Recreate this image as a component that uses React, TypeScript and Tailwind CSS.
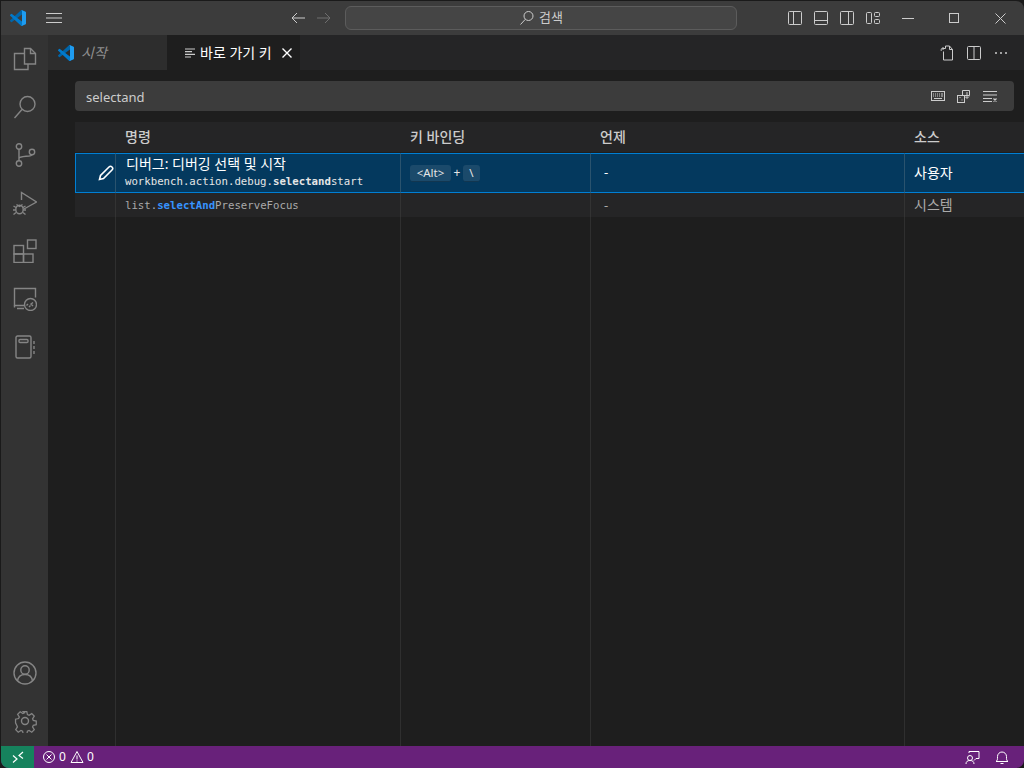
const sansFont = "font-['Noto_Sans','Noto_Sans_CJK_KR',sans-serif]"

function VsLogo() {
    return (
        <svg viewBox="0 0 100 100" className="w-4 h-4 shrink-0">
            <path fill="#0065A9" d="M96.5 10.8 75.9.9a6.2 6.2 0 0 0-7.1 1.2L1.3 63.6a4.2 4.2 0 0 0 0 6.2l5.5 5a4.2 4.2 0 0 0 5.3.2L93.4 13.6c2.7-2 6.6-.1 6.6 3.3v-.2a6.2 6.2 0 0 0-3.5-5.9z" />
            <path fill="#007ACC" d="M96.5 89.2 75.9 99.1a6.2 6.2 0 0 1-7.1-1.2L1.3 36.4a4.2 4.2 0 0 1 0-6.2l5.5-5a4.2 4.2 0 0 1 5.3-.2L93.4 86.4c2.7 2 6.6.1 6.6-3.3v.2a6.2 6.2 0 0 1-3.5 5.9z" />
            <path fill="#1F9CF0" d="M75.9 99.1a6.2 6.2 0 0 1-7.1-1.2c2.3 2.3 6.2.7 6.2-2.6V4.7c0-3.3-3.9-4.9-6.2-2.6A6.2 6.2 0 0 1 75.9.9l20.6 9.9a6.2 6.2 0 0 1 3.5 5.6v67.2a6.2 6.2 0 0 1-3.5 5.6z" />
        </svg>
    )
}

type IconProps = { size?: number; color?: string; children: React.ReactNode }

function Icon({ size = 16, color = "#cccccc", children }: IconProps) {
    return (
        <svg width={size} height={size} viewBox="0 0 16 16" fill="none" stroke={color} strokeWidth={1} className="shrink-0">
            {children}
        </svg>
    )
}

function TitleBar() {
    return (
        <div className="flex items-center h-[34px] bg-[#3c3c3c] shrink-0 rounded-tr-lg">
            <div className="w-[9px]" />
            <VsLogo />
            <div className="ml-5">
                <Icon>
                    <path d="M0 3.500h16M0 8h16M0 12.500h16" />
                </Icon>
            </div>
            <div className="ml-[228px]">
                <Icon size={16}>
                    <path d="M15 8H2M7 3 2 8l5 5" />
                </Icon>
            </div>
            <div className="ml-[10px]">
                <Icon size={16} color="#6e6e6e">
                    <path d="M1 8h13M9 3l5 5-5 5" />
                </Icon>
            </div>
            <div className="ml-[13px] w-[392px] h-6 rounded-md bg-[#454545] border border-[#5c5c5c] flex items-center justify-center gap-[4px] text-[13px] text-[#cccccc]">
                <Icon size={16}>
                    <circle cx="9.500" cy="6" r="4.500" />
                    <path d="M6.300 9.300 1.500 14.500" />
                </Icon>
                <span>검색</span>
            </div>
            <div className="ml-[50px] flex gap-[10px]">
                <Icon>
                    <rect x="1.500" y="1.500" width="13" height="13" rx="1" />
                    <path d="M6.500 1.500v13" />
                </Icon>
                <Icon>
                    <rect x="1.500" y="1.500" width="13" height="13" rx="1" />
                    <path d="M1.500 10.500h13" />
                </Icon>
                <Icon>
                    <rect x="1.500" y="1.500" width="13" height="13" rx="1" />
                    <path d="M9.500 1.500v13" />
                </Icon>
                <Icon>
                    <rect x="1.500" y="2.500" width="5" height="11" rx="1" />
                    <rect x="9.500" y="2.500" width="5" height="4" rx="1" />
                    <rect x="9.500" y="9.500" width="5" height="4" rx="1" />
                </Icon>
            </div>
            <div className="ml-[21px] w-3 h-px bg-[#cccccc]" />
            <div className="ml-[35px] w-[10px] h-[10px] border border-[#cccccc]" />
            <div className="ml-[36px]">
                <svg width="11" height="11" viewBox="0 0 11 11" stroke="#cccccc" fill="none">
                    <path d="M.5.5l10 10M10.500.5l-10 10" />
                </svg>
            </div>
        </div>
    )
}

function ActivityItem({ children }: { children: React.ReactNode }) {
    return (
        <div className="h-12 flex items-center justify-center">
            <svg width="24" height="24" viewBox="0 0 24 24" fill="none" stroke="#858585" strokeWidth={1.4}>
                {children}
            </svg>
        </div>
    )
}

function ActivityBar() {
    return (
        <div className="w-[47px] bg-[#333333] flex flex-col justify-between shrink-0">
            <div className="flex flex-col">
                <ActivityItem>
                    <path d="M11.500 1.500h6l5 5v10.500h-11z" />
                    <path d="M17.500 1.500v5h5" />
                    <path d="M11.500 6.500H1.500v16h13.500V17" />
                </ActivityItem>
                <ActivityItem>
                    <circle cx="14.500" cy="9" r="7.500" />
                    <path d="M9 14.500 1.500 23" />
                </ActivityItem>
                <ActivityItem>
                    <circle cx="6" cy="3.500" r="2.700" />
                    <circle cx="6" cy="20.500" r="2.700" />
                    <circle cx="19" cy="9" r="2.700" />
                    <path d="M6 6.200v11.600M6 15.500c0-3 13-1.500 13-3.800" />
                </ActivityItem>
                <ActivityItem>
                    <path d="M8.500 9V1.500L23.500 11 11 18" />
                    <ellipse cx="6.500" cy="18.500" rx="3.700" ry="4.300" />
                    <path d="M3.500 13.500 6.500 15.500 9.500 13.500M.5 15l2.500 1.500M12.500 15 10 16.500M0 19h2.800M13 19h-2.800M.5 23.500 3 21.500M12.500 23.500 10 21.500" />
                </ActivityItem>
                <ActivityItem>
                    <rect x="1" y="6.500" width="9.500" height="8.500" />
                    <rect x="1" y="15" width="9.500" height="8.500" />
                    <rect x="10.500" y="15" width="9.500" height="8.500" />
                    <rect x="14.500" y="1" width="8.500" height="8.500" />
                </ActivityItem>
                <ActivityItem>
                    <path d="M11 18.500H1.500V1.500h21v9" />
                    <path d="M1.500 18.500v2M4 21.500h7" />
                    <circle cx="17.500" cy="17.500" r="6" />
                    <path d="M15 17l-1.500 1.500M20 15.500l-2 1.500 2 2M16 20l1.500-1.500" />
                </ActivityItem>
                <ActivityItem>
                    <rect x="3" y="1" width="15" height="22" rx="1.500" />
                    <rect x="6" y="4.500" width="9" height="3" rx="1" />
                    <path d="M21 6v3M21 11v3M21 16v3" />
                </ActivityItem>
            </div>
            <div className="flex flex-col mb-[1px]">
                <ActivityItem>
                    <circle cx="12" cy="12" r="11" />
                    <circle cx="12" cy="9" r="4.200" />
                    <path d="M4.500 20c.5-4 3.500-6.500 7.500-6.500s7 2.500 7.500 6.500" />
                </ActivityItem>
                <ActivityItem>
                    <circle cx="12" cy="12" r="3.500" />
                    <path d="M10 1.500h4l.7 3.400 1.800.8 3-1.900 2.800 2.800-1.900 3 .8 1.800 3.300.7v4l-3.300.7-.8 1.800 1.900 3-2.800 2.800-3-1.900-1.800.8-.7 3.300h-4l-.7-3.300-1.800-.8-3 1.900-2.800-2.800 1.900-3-.8-1.800L1.500 14v-4l3.400-.7.8-1.800-1.900-3 2.800-2.800 3 1.900 1.800-.8z" transform="translate(1.200 1.200) scale(0.9)" />
                </ActivityItem>
            </div>
        </div>
    )
}

function TabBar() {
    return (
        <div className="flex h-[35px] bg-[#252526] shrink-0">
            <div className="w-[119px] bg-[#2d2d2d] flex items-center pl-[10px] gap-[7px]">
                <VsLogo />
                <span className="text-[14px] italic text-[#8f8f8f]">시작</span>
            </div>
            <div className="w-[133px] bg-[#1e1e1e] flex items-center pl-[18px] text-[14px] text-white">
                <svg width="10" height="10" viewBox="0 0 10 10" className="shrink-0">
                    <path d="M0 1h10M0 3.700h7M0 6.300h10M0 9h6" stroke="#cccccc" strokeWidth={1.200} />
                </svg>
                <span className="ml-[5px] whitespace-nowrap">바로 가기 키</span>
                <svg width="10" height="10" viewBox="0 0 10 10" stroke="#ffffff" strokeWidth={1.400} className="ml-[10px] shrink-0">
                    <path d="M.5.5l9 9M9.500.5l-9 9" />
                </svg>
            </div>
            <div className="flex-1 flex items-center justify-end gap-[11px] pr-[15px]">
                <Icon>
                    <path d="M4.500 6.500v8.500h9V4.500l-3-3.500H6.500v2.500M10.500 1v3.500h3" />
                    <path d="M6.500 3.500H3.500a1.500 1.500 0 0 0-1 2.500M4.500 2l-1.500 1.500L4.500 5" />
                </Icon>
                <Icon>
                    <rect x="1.500" y="1.500" width="13" height="13" rx="1" />
                    <path d="M8 1.500v13" />
                </Icon>
                <Icon>
                    <circle cx="3" cy="8" r="1" fill="#cccccc" stroke="none" />
                    <circle cx="8" cy="8" r="1" fill="#cccccc" stroke="none" />
                    <circle cx="13" cy="8" r="1" fill="#cccccc" stroke="none" />
                </Icon>
            </div>
        </div>
    )
}

function SearchBox() {
    return (
        <div className="h-[30px] mr-[10px] bg-[#3c3c3c] rounded-sm flex items-center pl-[11px] pr-[16px] text-[13px] text-[#cccccc]">
            <span className="flex-1 pt-[3px]">selectand</span>
            <div className="flex gap-[10px]">
                <Icon>
                    <rect x="1.500" y="3.500" width="13" height="9" />
                    <path d="M3 6h1M5 6h1M7 6h1M9 6h1M11 6h2M3 8h1M5 8h1M7 8h1M9 8h1M11 8h2M4 10.500h8" />
                </Icon>
                <Icon>
                    <rect x="1.500" y="7.500" width="7" height="7" />
                    <path d="M6.500 7.500v-5h7v5h-5" />
                    <path d="M11 4v6M9 8.500l2 2 2-2M3.500 9.500h1M5.500 12h1" />
                </Icon>
                <Icon>
                    <path d="M1 3.500h14M1 7h14M1 10.500h9M1 13.500h9" />
                    <path d="M11.500 10.500l3 3M14.500 10.500l-3 3" strokeWidth={1.300} />
                </Icon>
            </div>
        </div>
    )
}

const monoClass = "font-['DejaVu_Sans_Mono',monospace] text-[10.7px]"

type ColumnProps = {
    width: string
    title?: string
    selected?: React.ReactNode
    row?: React.ReactNode
}

function Column({ width, title, selected, row }: ColumnProps) {
    return (
        <div className={`${width} flex flex-col`}>
            <div className="h-[30px] mb-px pb-[2px] bg-[#252526] flex items-center pl-[9px] text-[14px] font-medium text-[#cccccc]">{title}</div>
            <div className="h-10 bg-[#04395e] border-y border-[#007fd4] border-r border-r-[#2a536e] flex items-center pl-[9px] text-white text-[14px]">{selected}</div>
            <div className="h-6 pt-px bg-[#252526] border-r border-[#333333] flex items-center pl-[9px] text-[#aaaaaa] text-[14px]">{row}</div>
            <div className="flex-1 border-r border-[#2f2f2f]" />
        </div>
    )
}

function KeyTable() {
    return (
        <div className="flex flex-1 mt-[11px]">
            <div className="w-[41px] flex flex-col">
                <div className="h-[30px] mb-px bg-[#252526]" />
                <div className="h-10 bg-[#04395e] border border-[#007fd4] border-r-[#2a536e] flex items-center justify-end">
                    <svg width="16" height="16" viewBox="0 0 16 16" fill="none" stroke="#ffffff" strokeWidth={1.600} className="mr-px">
                        <path d="M1.500 14.500l1-4L11 2c1-1 2-1 3 0s1 2 0 3l-8.500 8.500z" />
                    </svg>
                </div>
                <div className="h-6 bg-[#252526] border-r border-[#333333]" />
                <div className="flex-1 border-r border-[#2f2f2f]" />
            </div>
            <Column
                width="w-[285px]"
                title="명령"
                selected={
                    <div className="flex flex-col">
                        <span className="leading-[19px] pl-px">디버그: 디버깅 선택 및 시작</span>
                        <span className={`${monoClass} leading-[18px] pb-px text-[#e6e6e6]`}>
                            workbench.action.debug.<span className="font-bold">selectand</span>start
                        </span>
                    </div>
                }
                row={
                    <span className={`${monoClass} pt-[1px]`}>
                        list.<span className="text-[#3794ff] font-bold">selectAnd</span>PreserveFocus
                    </span>
                }
            />
            <Column
                width="w-[190px]"
                title="키 바인딩"
                selected={
                    <div className="flex items-center text-[11.5px] text-[#e6e6e6]">
                        <span className="h-[17px] w-[41px] flex items-center justify-center rounded-[3px] bg-[#1b4a6b] border-b border-[#123650]">{"<Alt>"}</span>
                        <span className="w-3 text-center text-xs">+</span>
                        <span className="h-[17px] w-[17px] flex items-center justify-center rounded-[3px] bg-[#1b4a6b] border-b border-[#123650]">\</span>
                    </div>
                }
            />
            <Column width="w-[314px]" title="언제" selected={<span className="pl-[4px] text-[13px]">-</span>} row={<span className="pl-[4px] text-[13px]">-</span>} />
            <div className="flex-1 flex flex-col">
                <div className="h-[30px] mb-px pb-[2px] bg-[#252526] flex items-center pl-[9px] text-[14px] font-medium text-[#cccccc]">소스</div>
                <div className="h-10 pb-[2px] bg-[#04395e] border-y border-[#007fd4] flex items-center pl-[9px] text-white text-[14px]">사용자</div>
                <div className="h-6 pb-px bg-[#252526] flex items-center pl-[9px] text-[#aaaaaa] text-[14px]">시스템</div>
            </div>
        </div>
    )
}

function StatusBar() {
    return (
        <div className="h-[22px] bg-[#68217a] flex items-center text-xs text-white shrink-0 rounded-b-lg">
            <div className="w-[33px] h-full bg-[#16825d] flex items-center justify-center rounded-bl-lg">
                <svg width="12" height="12" viewBox="0 0 12 12" fill="none" stroke="#ffffff" strokeWidth={1.200}>
                    <path d="M1 4.500 5 8l-4 3.500M11 1 7 4.500 11 7.500" />
                </svg>
            </div>
            <div className="ml-[8px] flex items-center gap-[3px]">
                <svg width="14" height="14" viewBox="0 0 14 14" fill="none" stroke="#ffffff">
                    <circle cx="7" cy="7" r="5.500" />
                    <path d="M4.500 4.500l5 5M9.500 4.500l-5 5" />
                </svg>
                <span>0</span>
                <svg width="14" height="14" viewBox="0 0 14 14" fill="none" stroke="#ffffff" className="ml-[1px]">
                    <path d="M7 1.500 13 12.500H1zM7 5.500v4M7 10.500v1" />
                </svg>
                <span>0</span>
            </div>
            <div className="flex-1" />
            <svg width="15" height="15" viewBox="0 0 15 15" fill="none" stroke="#ffffff">
                <path d="M4 3V1.500h10v7H11L9 10.500" />
                <circle cx="5" cy="8" r="2.500" />
                <path d="M1 14c0-2.500 1.500-3.500 4-3.500s4 1 4 3.500" />
            </svg>
            <svg width="14" height="15" viewBox="0 0 14 15" fill="none" stroke="#ffffff" className="ml-[15px] mr-[15px]">
                <path d="M1 11.500c1.500-1 1.500-2 1.500-5a4.500 4.500 0 0 1 9 0c0 3 0 4 1.500 5zM5.500 13.500h3" />
            </svg>
        </div>
    )
}

function App() {
    return (
        <div className={`w-[1024px] h-[768px] pt-px pl-px bg-[#1a1a1a] overflow-hidden ${sansFont}`}>
            <div className="flex flex-col h-full">
                <TitleBar />
                <div className="flex flex-1 min-h-0">
                    <ActivityBar />
                    <div className="flex-1 flex flex-col bg-[#1e1e1e] min-w-0">
                        <TabBar />
                        <div className="flex-1 flex flex-col pl-[27px] pt-[11px] min-h-0">
                            <SearchBox />
                            <KeyTable />
                        </div>
                    </div>
                </div>
                <StatusBar />
            </div>
        </div>
    )
}

export default App
